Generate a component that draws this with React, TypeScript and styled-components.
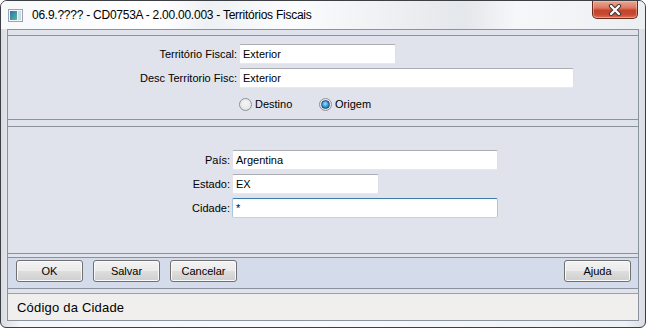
import styled, { createGlobalStyle } from "styled-components";

const GlobalStyle = createGlobalStyle`
  html, body {
    margin: 0;
    padding: 0;
    background: #ffffff;
  }
  * {
    box-sizing: border-box;
  }
`;

const uiFont = `"Liberation Sans", Arial, sans-serif`;

const Window = styled.div`
  width: 646px;
  height: 328px;
  border: 1px solid #3c3f44;
  border-radius: 7px 7px 6px 6px;
  background: linear-gradient(90deg, #d9dde2 0%, #f4f6f8 3%, #f7f9fb 50%, #eef1f4 97%, #d9dde2 100%);
  display: flex;
  flex-direction: column;
  overflow: hidden;
  font-family: ${uiFont};
`;

const TitleBar = styled.div`
  height: 28px;
  display: flex;
  align-items: center;
  background: linear-gradient(90deg, #f7f9fb 0%, #ffffff 25%, #eef1f4 32%, #fbfcfd 45%, #e4e7eb 72%, #f6f7f9 80%, #eceff2 100%);
`;

const TitleIcon = styled.svg`
  margin-left: 7px;
  flex-shrink: 0;
`;

const Title = styled.span`
  margin-left: 9px;
  font-size: 12px;
  letter-spacing: -0.25px;
  color: #000;
`;

const CloseButton = styled.div`
  align-self: flex-start;
  margin-left: auto;
  margin-right: 7px;
  width: 46px;
  height: 18px;
  border: 1px solid #6b2a20;
  border-top: none;
  border-radius: 0 0 5px 5px;
  background: linear-gradient(180deg, #e9a793 0%, #dc7a62 40%, #c4432c 55%, #c94a32 80%, #dc7458 100%);
  box-shadow: inset 0 0 0 1px rgba(255, 210, 195, 0.45);
  display: flex;
  align-items: center;
  justify-content: center;
`;

const Client = styled.div`
  flex: 1;
  margin: 0 6px 6px 6px;
  border: 1px solid #8a929d;
  background: #e0e3eb;
  display: flex;
  flex-direction: column;
`;

const Panel = styled.div<{ $top: number; $height: number; $pad: number }>`
  margin-top: ${(p) => p.$top}px;
  height: ${(p) => p.$height}px;
  border-top: 1px solid #8a929d;
  border-bottom: 1px solid #8a929d;
  background: #e0e3eb;
  padding-top: ${(p) => p.$pad}px;
`;

const Form = styled.div<{ $labelWidth: number }>`
  display: grid;
  grid-template-columns: ${(p) => p.$labelWidth}px 1fr;
  column-gap: 2px;
  row-gap: 4px;
  align-items: center;
`;

const Label = styled.label`
  font-size: 11px;
  color: #000;
  text-align: right;
  white-space: nowrap;
`;

const Field = styled.div<{ $width: number; $focused?: boolean }>`
  width: ${(p) => p.$width}px;
  height: 20px;
  background: #fff;
  border: 1px solid;
  border-color: ${(p) =>
    p.$focused ? "#3d7bad #a4c9e3 #b7d9ed #a4c9e3" : "#abadb3 #dbdfe6 #e3e9ef #e2e3ea"};
  border-radius: 2px;
  padding: 0 3px;
  font-size: 11px;
  line-height: 18px;
  color: #000;
  white-space: nowrap;
  overflow: hidden;
`;

const RadioRow = styled.div`
  grid-column: 2;
  display: flex;
  margin-top: 2px;
  height: 20px;
  align-items: center;
`;

const RadioItem = styled.div`
  width: 80px;
  display: flex;
  align-items: center;
  font-size: 11px;
  color: #000;
`;

const RadioCircle = styled.span<{ $checked?: boolean }>`
  width: 13px;
  height: 13px;
  border-radius: 50%;
  border: 1px solid #8f9296;
  background: radial-gradient(circle at 50% 40%, #f6f6f6 0%, #e8e8e8 60%, #d6d6d6 100%);
  margin-right: 3px;
  display: flex;
  align-items: center;
  justify-content: center;
  flex-shrink: 0;

  &::after {
    content: "";
    display: ${(p) => (p.$checked ? "block" : "none")};
    width: 7px;
    height: 7px;
    border-radius: 50%;
    background: radial-gradient(circle at 45% 40%, #9fe2ff 0%, #3aa0e0 45%, #0f4f8c 100%);
    border: 1px solid #1a4a78;
  }
`;

const ButtonBar = styled.div`
  margin-top: 3px;
  height: 32px;
  border-top: 1px solid #8a929d;
  border-bottom: 1px solid #8a929d;
  background: #d4dcec;
  display: flex;
  gap: 10px;
  padding: 2px 7px 0 8px;
`;

const Button = styled.div<{ $push?: boolean }>`
  width: 67px;
  height: 22px;
  margin-left: ${(p) => (p.$push ? "auto" : "0")};
  border: 1px solid #707070;
  border-radius: 3px;
  background: linear-gradient(180deg, #f3f3f3 0%, #ebebeb 48%, #dddddd 52%, #cfcfcf 100%);
  box-shadow: inset 0 0 0 1px #fafafa;
  display: flex;
  align-items: center;
  justify-content: center;
  font-size: 11px;
  color: #000;
`;

const StatusBar = styled.div`
  margin-top: 4px;
  flex: 1;
  border-top: 1px solid #9aa0a8;
  background: #f0efed;
  display: flex;
  align-items: center;
  padding-left: 9px;
  font-size: 13px;
  letter-spacing: 0.2px;
  color: #000;
`;

const App = () => {
  return (
    <>
      <GlobalStyle />
      <Window>
        <TitleBar>
          <TitleIcon width="15" height="13" viewBox="0 0 15 13">
            <defs>
              <linearGradient id="ig" x1="0" y1="0" x2="1" y2="1">
                <stop offset="0" stopColor="#2f6fb0" />
                <stop offset="1" stopColor="#58b89a" />
              </linearGradient>
            </defs>
            <rect x="0.5" y="0.5" width="14" height="12" fill="#f4f6f8" stroke="#9aa4ae" />
            <rect x="2" y="2" width="7" height="9" fill="url(#ig)" />
            <rect x="10" y="2" width="3" height="9" fill="#cddde8" />
          </TitleIcon>
          <Title>06.9.???? - CD0753A - 2.00.00.003 - Territórios Fiscais</Title>
          <CloseButton>
            <svg width="14" height="12" viewBox="0 0 14 12">
              <path d="M3 2 L11 10 M11 2 L3 10" stroke="#3b3b3b" strokeWidth="4.2" strokeLinecap="round" />
              <path d="M3 2 L11 10 M11 2 L3 10" stroke="#ffffff" strokeWidth="2.2" strokeLinecap="round" />
            </svg>
          </CloseButton>
        </TitleBar>
        <Client>
          <Panel $top={5} $height={85} $pad={8}>
            <Form $labelWidth={229}>
              <Label>Território Fiscal:</Label>
              <Field $width={157}>Exterior</Field>
              <Label>Desc Territorio Fisc:</Label>
              <Field $width={335}>Exterior</Field>
              <RadioRow>
                <RadioItem>
                  <RadioCircle />
                  Destino
                </RadioItem>
                <RadioItem>
                  <RadioCircle $checked />
                  Origem
                </RadioItem>
              </RadioRow>
            </Form>
          </Panel>
          <Panel $top={6} $height={128} $pad={23}>
            <Form $labelWidth={222}>
              <Label>País:</Label>
              <Field $width={266}>Argentina</Field>
              <Label>Estado:</Label>
              <Field $width={147}>EX</Field>
              <Label>Cidade:</Label>
              <Field $width={266} $focused>
                *
              </Field>
            </Form>
          </Panel>
          <ButtonBar>
            <Button>OK</Button>
            <Button>Salvar</Button>
            <Button>Cancelar</Button>
            <Button $push>Ajuda</Button>
          </ButtonBar>
          <StatusBar>Código da Cidade</StatusBar>
        </Client>
      </Window>
    </>
  );
};

export default App;
